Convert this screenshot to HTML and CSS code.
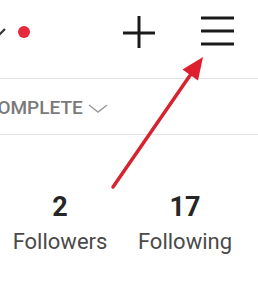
FILE: index.html
```html
<!DOCTYPE html>
<html>
<head>
<meta charset="utf-8">
<link rel="stylesheet" href="styles.css">
</head>
<body>
<div class="page">
  <header class="topbar">
    <svg class="left-icons" width="36" height="64" viewBox="0 0 36 64">
      <polyline points="-6,28 0,34 5,29" fill="none" stroke="#333" stroke-width="2.2"/>
      <circle cx="24" cy="32" r="6" fill="#e8283c"/>
    </svg>
    <svg class="plus" width="38" height="64" viewBox="0 0 38 64">
      <line x1="19" y1="16" x2="19" y2="48" stroke="#1a1a1a" stroke-width="3"/>
      <line x1="3" y1="33" x2="35" y2="33" stroke="#1a1a1a" stroke-width="3"/>
    </svg>
    <svg class="menu" width="40" height="64" viewBox="0 0 40 64">
      <line x1="3" y1="18" x2="36" y2="18" stroke="#1a1a1a" stroke-width="3"/>
      <line x1="3" y1="31" x2="36" y2="31" stroke="#1a1a1a" stroke-width="3"/>
      <line x1="3" y1="44" x2="36" y2="44" stroke="#1a1a1a" stroke-width="3"/>
    </svg>
  </header>
  <div class="status">
    <span class="status-text">COMPLETE</span>
    <svg class="chev" width="20" height="10" viewBox="0 0 20 10">
      <polyline points="1,1 10,8 19,1" fill="none" stroke="#9a9a9a" stroke-width="1.5"/>
    </svg>
  </div>
  <div class="stats">
    <div class="stat">
      <div class="num">2</div>
      <div class="label">Followers</div>
    </div>
    <div class="stat">
      <div class="num">17</div>
      <div class="label">Following</div>
    </div>
  </div>
  <svg class="annotation" width="258" height="300" viewBox="0 0 258 300">
    <line x1="113" y1="187" x2="191" y2="74" stroke="#d8232f" stroke-width="3.5" stroke-linecap="round"/>
    <polygon points="203,57 198,80.5 182.5,69.5" fill="#e01f2d"/>
  </svg>
</div>
</body>
</html>
```

FILE: styles.css
```css
html, body {
  margin: 0;
  padding: 0;
  background: #ffffff;
}
.page {
  position: relative;
  width: 258px;
  height: 300px;
  overflow: hidden;
  font-family: Roboto, "Liberation Sans", sans-serif;
}
.topbar {
  display: flex;
  align-items: flex-start;
  height: 78px;
  border-bottom: 1px solid #e4e4e4;
  padding-right: 20px;
}
.left-icons {
  display: block;
}
.plus {
  display: block;
  margin-left: auto;
}
.menu {
  display: block;
  margin-left: 40px;
}
.status {
  display: flex;
  align-items: center;
  height: 56px;
  padding-top: 2px;
  box-sizing: border-box;
  border-bottom: 1px solid #e4e4e4;
  overflow: hidden;
}
.status-text {
  margin-left: -15px;
  font-size: 19px;
  font-weight: 500;
  color: #7a7a7a;
  white-space: nowrap;
}
.chev {
  display: block;
  margin-left: 5px;
  margin-top: 2px;
}
.stats {
  display: flex;
  gap: 25px;
  padding-left: 10px;
  margin-top: 57px;
}
.stat {
  width: 100px;
  text-align: center;
}
.num {
  font-size: 27px;
  font-weight: 700;
  line-height: 30px;
  color: #262626;
}
.label {
  font-size: 22px;
  line-height: 26px;
  margin-top: 7px;
  color: #4a4a4a;
}
.annotation {
  position: absolute;
  left: 0;
  top: 0;
  pointer-events: none;
}
```
